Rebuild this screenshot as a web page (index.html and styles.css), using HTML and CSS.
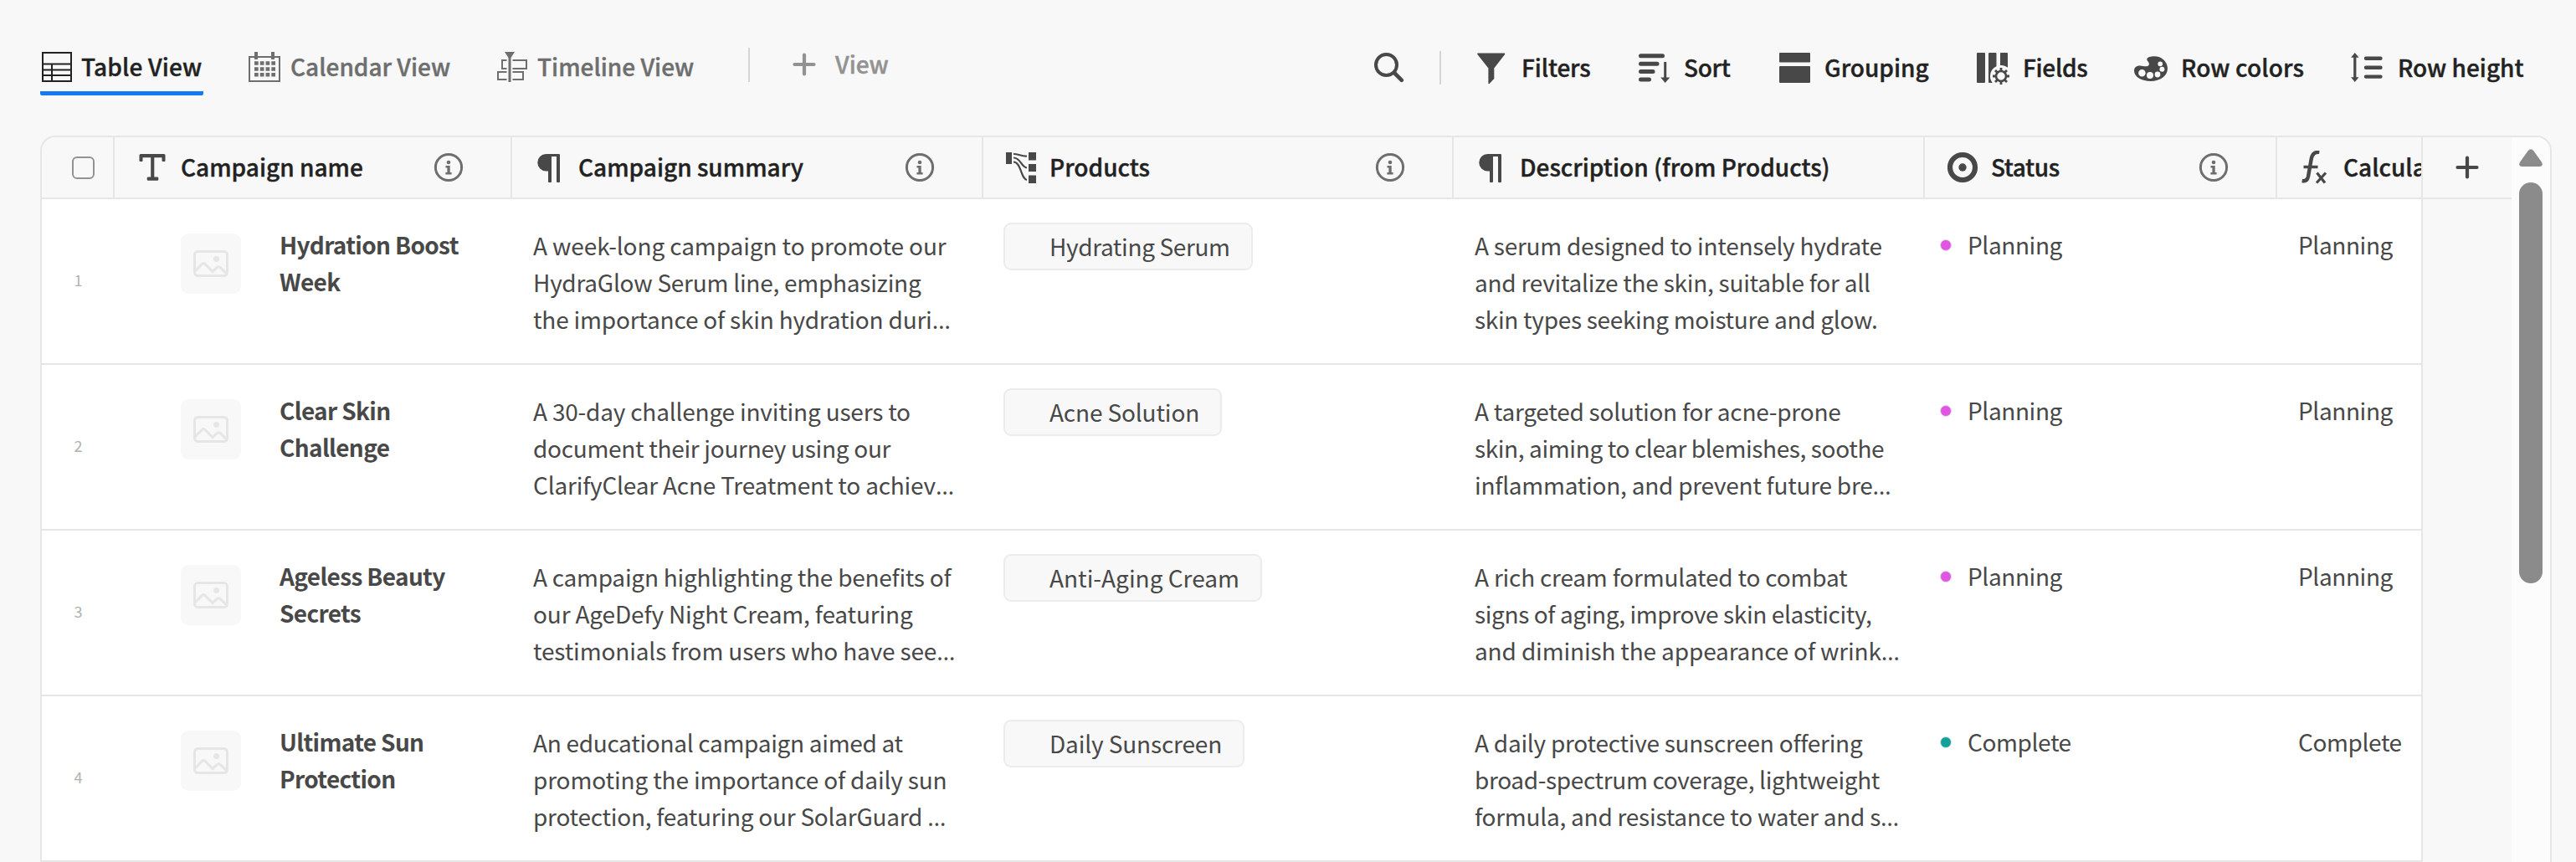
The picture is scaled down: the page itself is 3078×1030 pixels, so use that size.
FILE: index.html
```html
<!DOCTYPE html>
<html lang="en">
<head>
<meta charset="utf-8">
<title>Campaigns</title>
<link rel="stylesheet" href="styles.css">
</head>
<body>
<svg class="sprite" aria-hidden="true">
  <symbol id="i-info" viewBox="0 0 36 36"><circle cx="18" cy="18" r="15.6" fill="none" stroke="currentColor" stroke-width="3"/><circle cx="18" cy="12" r="2.3" fill="currentColor"/><path d="M14.500 16h5.200v8h1.900v2.400h-7.200V24h2v-5.600h-1.900z" fill="currentColor"/></symbol>
  <symbol id="i-para" viewBox="0 0 28 34"><path d="M10.500 0H26a1 1 0 0 1 1 1v32a1 1 0 0 1-1 1h-2a1 1 0 0 1-1-1V3h-6v30a1 1 0 0 1-1 1h-2a1 1 0 0 1-1-1V20.500h-2.500a10.250 10.250 0 0 1 0-20.500z" fill="currentColor"/></symbol>
  <symbol id="i-image" viewBox="0 0 42 32"><rect x="1.500" y="1.500" width="39" height="29" rx="4" fill="none" stroke="currentColor" stroke-width="3"/><path d="M2 25l8.200-8.400q2-1.900 4 0l8.800 9 5.200-5q2-1.700 4 0l7.300 7" fill="none" stroke="currentColor" stroke-width="3"/><circle cx="27.500" cy="10.500" r="3.500" fill="currentColor"/></symbol>
</svg>

<header class="toolbar">
  <nav class="views">
    <a class="tab tab-table">
      <svg viewBox="0 0 36 36" width="36" height="36"><g fill="none" stroke="currentColor" stroke-width="2"><path d="M1 1h34v34H1zM1 14.500h34M1 21.500h34M1 28h34M12 14.500V35"/></g></svg>
      <span>Table View</span>
    </a>
    <a class="tab tab-calendar">
      <svg viewBox="0 0 38 36" width="38" height="36"><path d="M1 6h36v29H1z" fill="none" stroke="currentColor" stroke-width="2"/><path d="M7 0h4v9H7zM27 0h4v9h-4z" fill="currentColor"/><path d="M7 13.500h25M7 20.500h25M7 27.200h25" stroke="currentColor" stroke-width="4.600" stroke-dasharray="4.700 2.070"/></svg>
      <span>Calendar View</span>
    </a>
    <a class="tab tab-timeline">
      <svg viewBox="0 0 36 36" width="36" height="36"><path d="M9 0h12l-4.500 7v29h-3V7z" fill="currentColor"/><path d="M11.500 10H6v10h5.500M18.500 10H35v10H18.500M11.500 24H1v9h10.500M18.500 24H31v9H18.500" fill="none" stroke="currentColor" stroke-width="2"/></svg>
      <span>Timeline View</span>
    </a>
    <i class="divider"></i>
    <a class="add-view">
      <svg viewBox="0 0 28 28" width="28" height="28"><path d="M14 2.500v23M2.500 14h23" stroke="currentColor" stroke-width="4.200" stroke-linecap="round"/></svg>
      <span>View</span>
    </a>
  </nav>
  <div class="tools">
    <svg class="search" viewBox="0 0 36 36" width="36" height="36"><circle cx="14.500" cy="14.500" r="12.500" fill="none" stroke="currentColor" stroke-width="4"/><path d="M24 24l8.800 8.800" stroke="currentColor" stroke-width="4.600" stroke-linecap="round"/></svg>
    <i class="divider"></i>
    <a class="tool tool-filters"><svg viewBox="0 0 34 38" width="34" height="38"><path d="M1 .5h31.500a.8.8 0 0 1 .6 1.400L20.300 18.500V31l-5.600 6a.8.8 0 0 1-1.300-.6V18.500L.4 1.900A.8.8 0 0 1 1 .5z" fill="currentColor"/></svg><span>Filters</span></a>
    <a class="tool tool-sort"><svg viewBox="0 0 38 36" width="38" height="36"><path d="M2.500 3.700h26M2.500 13.200h19.500M2.500 22.600H17M2.500 32h10" stroke="currentColor" stroke-width="5" stroke-linecap="round"/><path d="M30.200 11h3v18.500h4L31.700 36l-5.500-6.500h4z" fill="currentColor"/></svg><span>Sort</span></a>
    <a class="tool tool-grouping"><svg viewBox="0 0 37 36" width="37" height="36"><rect width="37" height="11.500" rx="1" fill="currentColor"/><rect y="16" width="37" height="20" rx="1" fill="currentColor"/></svg><span>Grouping</span></a>
    <a class="tool tool-fields"><svg viewBox="0 0 39 38" width="39" height="38"><path d="M1 0h8a1 1 0 0 1 1 1v34a1 1 0 0 1-1 1H1a1 1 0 0 1-1-1V1a1 1 0 0 1 1-1zM15 0h7.500a1 1 0 0 1 1 1v34a1 1 0 0 1-1 1H15a1 1 0 0 1-1-1V1a1 1 0 0 1 1-1zM29 0h7a1 1 0 0 1 1 1v18h-9V1a1 1 0 0 1 1-1z" fill="currentColor"/><circle cx="29" cy="28" r="13" class="knock"/><circle cx="29" cy="28" r="6" fill="none" stroke="currentColor" stroke-width="2.600"/><path d="M29 18v4M29 34v4M19 28h4M35 28h4M22 21l2.800 2.800M33.200 32.200L36 35M22 35l2.800-2.800M33.200 23.800L36 21" stroke="currentColor" stroke-width="2.800"/></svg><span>Fields</span></a>
    <a class="tool tool-colors"><svg viewBox="0 0 40 30" width="40" height="30"><path fill-rule="evenodd" fill="currentColor" d="M24 .2C33 .2 40 6.500 40 15S31 30 20 30 0 25 0 17.500C0 13.500 3 11.200 7 11.400c3 .1 5.500 1.200 8 .8 2.600-.4 3.600-2.300 2.400-4.500C16 5.300 15 5 15.300 3.500 15.800 1.300 20 .2 24 .2zM9.400 16a4.300 4.300 0 1 0 0 8.600 4.300 4.300 0 0 0 0-8.600zM19 19a4 4 0 1 0 0 8 4 4 0 0 0 0-8zM28 18.600a3.400 3.400 0 1 0 0 6.800 3.400 3.400 0 0 0 0-6.800zM33.400 12.800a3 3 0 1 0 0 6 3 3 0 0 0 0-6zM31.200 6.400a2.900 2.900 0 1 0 0 5.800 2.900 2.900 0 0 0 0-5.800z"/></svg><span>Row colors</span></a>
    <a class="tool tool-height"><svg viewBox="0 0 38 36" width="38" height="36"><path d="M4.800 0l4.700 5.800H6.400v23.400h3.100L4.800 35 .1 29.200h3.100V5.800H.1z" fill="currentColor"/><path d="M18 6.800h17.500M18 17.700h17.500M18 28.600h17.500" stroke="currentColor" stroke-width="4.400" stroke-linecap="round"/></svg><span>Row height</span></a>
  </div>
</header>

<main class="sheet">
  <section class="grid">
    <div class="row head">
      <div class="cell select"><span class="checkbox"></span></div>
      <div class="cell"><svg class="type" viewBox="0 0 38 38" width="38" height="38"><path d="M4 3h28a1.500 1.500 0 0 1 1.500 1.500V11a1 1 0 0 1-1 1h-2a1 1 0 0 1-1-1V7.300H20.300V30.500h3.800a1.200 1.200 0 0 1 1.200 1.200v1.800a1.200 1.200 0 0 1-1.200 1.200H12.900a1.200 1.200 0 0 1-1.200-1.200v-1.800a1.200 1.200 0 0 1 1.200-1.200h3.300V7.300H6.500V11a1 1 0 0 1-1 1h-2a1 1 0 0 1-1-1V4.500A1.500 1.500 0 0 1 4 3z" fill="currentColor"/></svg><span class="label">Campaign name</span><svg class="info"><use href="#i-info"/></svg></div>
      <div class="cell"><svg class="type para"><use href="#i-para"/></svg><span class="label">Campaign summary</span><svg class="info"><use href="#i-info"/></svg></div>
      <div class="cell"><svg class="type" viewBox="0 0 38 38" width="38" height="38"><path d="M0 1h7v14H0zM27 1h9v9.500h-9zM27 15h9v9h-9zM27 28.500h9V38h-9z" fill="currentColor"/><path d="M9 3c6 0 10 3 16 2.500M9 7.500c9 0 9 11.500 16 12M9 12.500c9 0 9 20.500 16 21.500" fill="none" stroke="currentColor" stroke-width="2.200"/></svg><span class="label">Products</span><svg class="info"><use href="#i-info"/></svg></div>
      <div class="cell"><svg class="type para"><use href="#i-para"/></svg><span class="label">Description (from Products)</span></div>
      <div class="cell"><svg class="type" viewBox="0 0 38 38" width="38" height="38"><circle cx="18" cy="19" r="15" fill="none" stroke="currentColor" stroke-width="6.200"/><circle cx="18" cy="19" r="4.700" fill="currentColor"/></svg><span class="label status-label">Status</span><svg class="info"><use href="#i-info"/></svg></div>
      <div class="cell"><svg class="type" viewBox="2 0 38 40" width="38" height="40"><path d="M25.300 1.900Q17.500 1 15.800 9.500L12 31Q10.600 37.200 4.700 36" fill="none" stroke="currentColor" stroke-width="4.400"/><path d="M6.500 19.500h17" stroke="currentColor" stroke-width="3.600"/><path d="M22.500 26.500l9.500 12M33 26.500L22 38.500" stroke="currentColor" stroke-width="3.200"/></svg><span class="label">Calcula</span></div>
      <div class="add-col"><svg viewBox="0 0 28 28" width="28" height="28"><path d="M14 2.500v23M2.500 14h23" stroke="currentColor" stroke-width="4.200" stroke-linecap="round"/></svg></div>
    </div>

    <div class="row">
      <div class="cell num">1</div>
      <div class="cell name"><span class="thumb"><svg><use href="#i-image"/></svg></span><p>Hydration Boost<br>Week</p></div>
      <div class="cell text"><p><span class="t10">A week-long campaign to promote our</span><br><span class="t25">HydraGlow Serum line, emphasizing</span><br><span class="t20">the importance of skin hydration duri<em>…</em></span></p></div>
      <div class="cell link"><span class="chip t35">Hydrating Serum</span></div>
      <div class="cell text"><p><span class="t25">A serum designed to intensely hydrate</span><br><span class="t25">and revitalize the skin, suitable for all</span><br><span class="t30">skin types seeking moisture and glow.</span></p></div>
      <div class="cell status"><i class="dot planning"></i><span>Planning</span></div>
      <div class="cell calc"><span>Planning</span></div>
    </div>

    <div class="row">
      <div class="cell num">2</div>
      <div class="cell name"><span class="thumb"><svg><use href="#i-image"/></svg></span><p>Clear Skin<br>Challenge</p></div>
      <div class="cell text"><p><span class="t20">A 30-day challenge inviting users to</span><br><span class="t30">document their journey using our</span><br><span class="t20">ClarifyClear Acne Treatment to achiev<em>…</em></span></p></div>
      <div class="cell link"><span class="chip t15">Acne Solution</span></div>
      <div class="cell text"><p><span class="t25">A targeted solution for acne-prone</span><br><span class="t40">skin, aiming to clear blemishes, soothe</span><br><span class="t25">inflammation, and prevent future bre<em>…</em></span></p></div>
      <div class="cell status"><i class="dot planning"></i><span>Planning</span></div>
      <div class="cell calc"><span>Planning</span></div>
    </div>

    <div class="row">
      <div class="cell num">3</div>
      <div class="cell name"><span class="thumb"><svg><use href="#i-image"/></svg></span><p>Ageless Beauty<br>Secrets</p></div>
      <div class="cell text"><p><span class="t25">A campaign highlighting the benefits of</span><br><span class="t15">our AgeDefy Night Cream, featuring</span><br><span class="t15">testimonials from users who have see<em>…</em></span></p></div>
      <div class="cell link"><span class="chip">Anti-Aging Cream</span></div>
      <div class="cell text"><p><span class="t20">A rich cream formulated to combat</span><br><span class="t40">signs of aging, improve skin elasticity,</span><br><span class="t15">and diminish the appearance of wrink<em>…</em></span></p></div>
      <div class="cell status"><i class="dot planning"></i><span>Planning</span></div>
      <div class="cell calc"><span>Planning</span></div>
    </div>

    <div class="row">
      <div class="cell num">4</div>
      <div class="cell name"><span class="thumb"><svg><use href="#i-image"/></svg></span><p>Ultimate Sun<br>Protection</p></div>
      <div class="cell text"><p><span class="t30">An educational campaign aimed at</span><br><span class="t15">promoting the importance of daily sun</span><br><span class="t25">protection, featuring our SolarGuard <em>…</em></span></p></div>
      <div class="cell link"><span class="chip t15">Daily Sunscreen</span></div>
      <div class="cell text"><p><span class="t25">A daily protective sunscreen offering</span><br><span class="t35">broad-spectrum coverage, lightweight</span><br><span class="t25">formula, and resistance to water and s<em>…</em></span></p></div>
      <div class="cell status"><i class="dot complete"></i><span>Complete</span></div>
      <div class="cell calc"><span>Complete</span></div>
    </div>
  </section>
  <aside class="scrollbar">
    <svg viewBox="0 0 28 21" width="28" height="21"><path d="M11 1.800q3-3.300 6 0l10.200 14.200q1.800 4.500-2.700 5H3.500q-4.500-.5-2.700-5z" fill="currentColor"/></svg>
    <i class="thumb-bar"></i>
  </aside>
</main>
</body>
</html>
```
FILE: styles.css
```css
* { box-sizing: border-box; }
html, body { height: 1030px; overflow: hidden; }
body {
  margin: 0;
  background: #f8f8f8;
  color: #484848;
  font: 400 28px/44px "Noto Sans CJK SC", "Noto Sans", sans-serif;
  white-space: nowrap;
}
svg { display: block; flex: none; }
p { margin: 0; }
em { font-family: "Noto Sans", sans-serif; font-style: normal; line-height: 0; }
.sprite { position: absolute; width: 0; height: 0; }

/* Tracking steps, in hundredths of a pixel */
.t10 { letter-spacing: -.1px; }
.t15 { letter-spacing: -.15px; }
.t20 { letter-spacing: -.2px; }
.t25 { letter-spacing: -.25px; }
.t30 { letter-spacing: -.3px; }
.t35 { letter-spacing: -.36px; }
.t40 { letter-spacing: -.38px; }

/* Toolbar */
.toolbar {
  display: flex;
  justify-content: space-between;
  height: 162px;
  padding-left: 48px;
  font-weight: 500;
}
.toolbar span, .label { -webkit-text-stroke: .4px currentColor; }
.views, .tools { display: flex; align-items: flex-start; }
.tab {
  display: flex;
  gap: 12px;
  height: 114px;
  padding-top: 57px;
  color: #6e6e6e;
}
.tab svg { margin-top: 5px; }
.tab-table {
  width: 195px;
  margin-right: 54px;
  padding-left: 2px;
  gap: 11px;
  color: #222;
  letter-spacing: .15px;
  background: linear-gradient(#147af3, #147af3) bottom / 100% 5px no-repeat;
  border-radius: 2px;
}
.tab-calendar { width: 297px; }
.tab-timeline { width: 300px; }
.divider { width: 2px; height: 41px; margin-top: 57px; background: #d5d5d5; }
.add-view { display: flex; gap: 23px; padding: 54px 0 0 51px; color: #929292; }
.add-view svg { margin-top: 9px; }

.tools { width: 1436px; padding-top: 58px; color: #484848; }
.tools .divider { height: 40px; margin: 3px 43px 0 42px; }
.search { margin-top: 5px; }
.tool { display: flex; }
.tool span { color: #222; }
.tool svg { margin-top: 5px; }
.tool-filters { width: 193px; gap: 19px; letter-spacing: -.12px; }
.tool-sort { width: 168px; gap: 16px; letter-spacing: -.34px; }
.tool-grouping { width: 236px; gap: 17px; }
.tool-fields { width: 188px; gap: 16px; letter-spacing: -.29px; }
.tool-colors { width: 259px; gap: 16px; letter-spacing: .12px; }
.tool-height { gap: 18px; }
.tool-colors svg { margin-top: 9px; }
.knock { fill: #f8f8f8; }

/* Table */
.sheet {
  display: flex;
  width: 3001px;
  height: 900px;
  margin-left: 48px;
  border: 2px solid #e6e6e6;
  border-radius: 18px 18px 0 0;
  overflow: hidden;
}
.grid { width: 2951px; }
.row {
  display: grid;
  grid-template-columns: 87px 475px 563px 562px 563px 421px 174px 106px;
  height: 198px;
}
.cell {
  display: flex;
  align-items: flex-start;
  min-width: 0;
  overflow: hidden;
  background: #fff;
  border-bottom: 2px solid #e6e6e6;
}
.cell:nth-child(7) { border-right: 2px solid #e6e6e6; }

.head { height: 74px; }
.head .cell, .add-col {
  align-items: center;
  background: #f8f8f8;
  border-right: 2px solid #e6e6e6;
  border-bottom: 2px solid #e6e6e6;
}
.head .cell { padding-left: 27px; }
.head .select { justify-content: center; padding-left: 13px; }
.add-col { display: flex; justify-content: center; border-right: 0; }
.checkbox { width: 27px; height: 27px; border: 2px solid #929292; border-radius: 6px; }
.type { margin-right: 14px; }
.para { width: 28px; height: 34px; margin: 2px 21px 0 3px; }
.label { margin-top: -3px; color: #222; font-weight: 500; }
.status-label { letter-spacing: -.4px; }
.info { width: 36px; height: 36px; margin-left: auto; margin-right: 56px; color: #6e6e6e; }

.num { justify-content: center; padding-top: 74px; font-size: 18px; color: #b1b1b1; }
.name { padding: 41px 0 0 79px; gap: 46px; font-weight: 700; letter-spacing: -.65px; }
.name p { margin-top: -9px; }
.thumb {
  display: flex;
  justify-content: center;
  width: 72px;
  height: 72px;
  padding-top: 20px;
  border-radius: 9px;
  background: #f8f8f8;
  color: #e6e6e6;
}
.thumb svg { width: 42px; height: 32px; }
.text { padding: 33px 0 0 25px; }
.link { padding: 28px 0 0 24px; }
.chip {
  height: 57px;
  padding: 4px 25px 0 53px;
  border: 2px solid #ececec;
  border-radius: 9px;
  background: #f8f8f8;
}
.status { padding: 32px 0 0 18px; letter-spacing: -.4px; }
.calc { padding: 32px 0 0 25px; letter-spacing: -.4px; }
.dot {
  width: 14px;
  height: 14px;
  margin: 16px 19px 0 0;
  border: 1px solid #e1e1e1;
  border-radius: 50%;
}
.planning { background: #e055e2; }
.complete { background: #12a19a; }

.scrollbar { width: 46px; padding: 14px 9px 0; background: #fcfcfc; color: #8b8b8b; }
.thumb-bar { display: block; height: 479px; margin-top: 19px; border-radius: 14px; background: #8b8b8b; }
```
